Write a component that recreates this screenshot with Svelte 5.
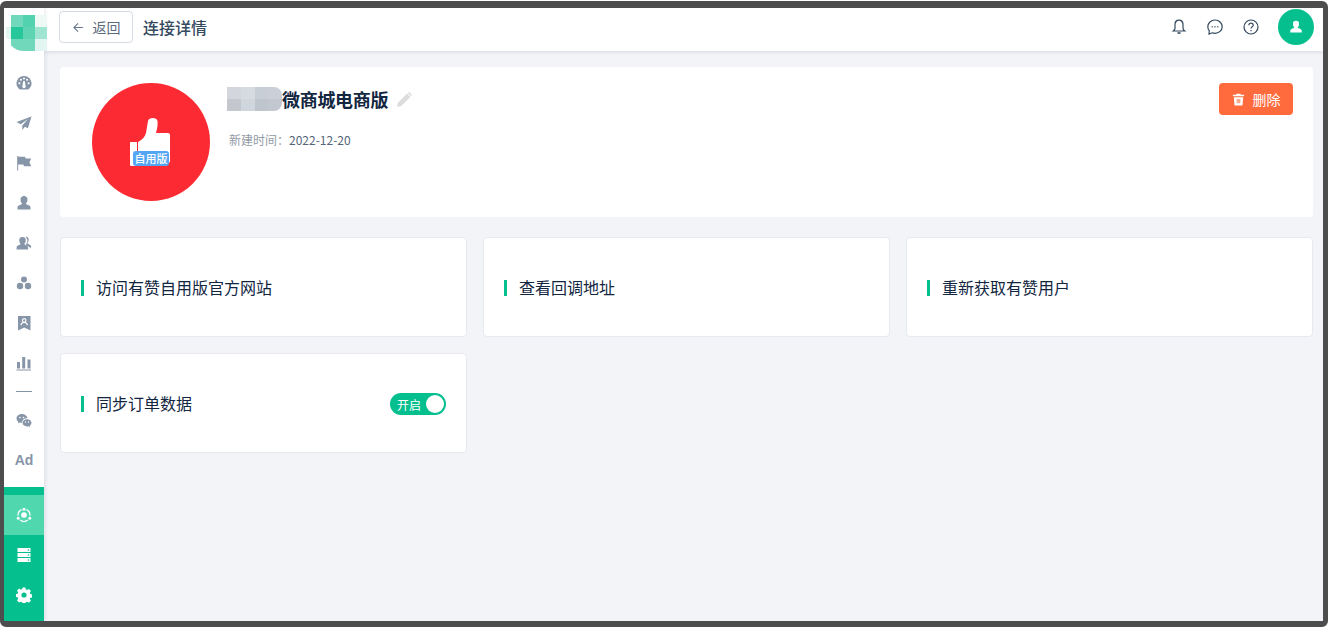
<script>
  const cards = ["访问有赞自用版官方网站", "查看回调地址", "重新获取有赞用户"];
  const logoCells = ["#fff", "#72d8bb", "#52d2ae", "#eef9f6", "#e3f5f0", "#25c79b", "#5ed4b3", "#a0e5d2", "#fff", "#72d8bb", "#72d8bb", "#e3f5f0"];
  const blurCells = ["#d3d6dc", "#d6dbe2", "#c8ced6", "#cbd0d8", "#c4c8ce", "#d0d6de", "#bfc5cd", "#c3c8d0"];
</script>

<div class="frame">
  <aside class="sidebar">
    <div class="logo">
      {#each logoCells as c}
        <span style="background:{c}"></span>
      {/each}
    </div>
    <nav class="nav">
      <a href="#a"><svg viewBox="0 0 16 16"><path fill-rule="evenodd" d="M8 1a7.500 7.500 0 0 0-5.300 12.800c.4.400 1 .7 1.600.7h7.400c.6 0 1.200-.3 1.600-.7A7.500 7.500 0 0 0 8 1zM7.300 6h1.400l.9 5a1.700 1.700 0 1 1-3.200 0z"/><circle cx="3.400" cy="8.300" r="1" fill="#fff"/><circle cx="12.600" cy="8.300" r="1" fill="#fff"/><circle cx="5" cy="4.800" r="1" fill="#fff"/><circle cx="11" cy="4.800" r="1" fill="#fff"/><circle cx="8" cy="3.400" r="1" fill="#fff"/></svg></a>
      <a href="#a"><svg viewBox="0 0 16 16"><path d="M15.500 1.500L.5 7l4.200 2.300L12 4 6.300 10.500V15l2.600-3.300 3 1.600z"/></svg></a>
      <a href="#a"><svg viewBox="0 0 16 16"><path d="M1.200 1h1v14.500h-1zM2.200 1.800H9l.6 1.800h5.600l-1.800 3.600 1.800 4H8l-.6-1.800H2.200z"/></svg></a>
      <a href="#a"><svg viewBox="0 0 16 16"><path d="M8 1a3.500 3.500 0 0 1 3.500 3.700c0 2-1 3.300-1.700 4 .1.900 4.200 1.300 4.700 3.300v2.400H1.500V12c.5-2 4.600-2.400 4.700-3.300-.7-.7-1.700-2-1.700-4A3.500 3.500 0 0 1 8 1z"/></svg></a>
      <a href="#a"><svg viewBox="0 0 16 16"><path d="M6.500 2a3.200 3.200 0 0 1 3.200 3.400c0 1.700-.9 3-1.500 3.600.1.900 3 1.200 3.800 2.700l.2 2.800H.5L.7 12c.5-1.900 3.900-2.100 4.100-3-.7-.7-1.500-1.900-1.500-3.600A3.200 3.200 0 0 1 6.500 2z"/><path d="M10 1.500c2.300.2 3.100 2.600 2.500 4.500-.3.900-.9 1.700-1.200 2.300.8 1 3.200 1.300 4 3l-1 2.200c-.2-2-3.800-2.500-4.400-4 .8-1.300 1.700-2.600 1.400-4.300-.1-1-.6-2.500-1.800-3.100z" /></svg></a>
      <a href="#a"><svg viewBox="0 0 16 16"><circle cx="8" cy="4.500" r="3"/><circle cx="4" cy="11" r="3.200"/><circle cx="12" cy="11" r="3.200"/></svg></a>
      <a href="#a"><svg viewBox="0 0 16 16"><path d="M2 1h12.500v14.500l-6.200-3-6.300 3zM8.200 3a2.400 2.400 0 0 0-1.500 4.200c-1 .4-2.200 1.100-2.400 2.800l1.300.3c.1-1.400 1.300-2.200 2.600-2.200s2.500.8 2.600 2.200l1.300-.3c-.2-1.700-1.400-2.400-2.400-2.800A2.400 2.400 0 0 0 8.200 3zm0 1.200a1.200 1.200 0 1 1 0 2.400 1.200 1.200 0 0 1 0-2.400z" fill-rule="evenodd"/></svg></a>
      <a href="#a"><svg viewBox="0 0 16 16"><path d="M1 7h3v6.500H1zM6.200 2h3v11.500h-3zM11.500 4.500h3v9h-3zM.5 14.500h14.500v1H.5z"/></svg></a>
      <div class="rule"></div>
      <a href="#a"><svg viewBox="0 0 16 16"><path d="M6 2C3 2 .5 4 .5 6.500c0 1.400.8 2.600 2 3.500l-.5 1.600L4 10.500c.6.200 1.200.3 2 .3-.2-2.600 2.500-4.800 5.600-4.500C11 3.900 8.700 2 6 2z"/><path d="M11 7.200c-2.500 0-4.500 1.600-4.500 3.600s2 3.600 4.500 3.600c.5 0 1-.1 1.500-.2l1.600 1-.4-1.500c1-.7 1.800-1.700 1.800-2.900 0-2-2-3.600-4.500-3.600z"/><g fill="#fff"><circle cx="4" cy="5.500" r=".8"/><circle cx="7.500" cy="5.500" r=".8"/><circle cx="9.500" cy="10" r=".7"/><circle cx="12.500" cy="10" r=".7"/></g></svg></a>
      <a href="#a" class="ad">Ad</a>
    </nav>
    <div class="tools">
      <a href="#a" class="active"><svg viewBox="0 0 16 16" fill="none" stroke="#fff" stroke-width="1.200"><circle cx="8" cy="8" r="2.800" fill="#fff" stroke="none"/><path d="M5.600 2.600a6 6 0 0 0-3.500 6.200M10.400 2.600a6 6 0 0 1 3.500 6.200M4.200 13a6 6 0 0 0 7.600 0"/><circle cx="8" cy="2.200" r="1.500" fill="#fff" stroke="none"/><circle cx="2.200" cy="11.300" r="1.500" fill="#fff" stroke="none"/><circle cx="13.800" cy="11.300" r="1.500" fill="#fff" stroke="none"/></svg></a>
      <a href="#a"><svg viewBox="0 0 16 16" fill="#fff"><path d="M1.500 1h13v4h-13zM1.500 6h13v4h-13zM1.500 11h13v4h-13z"/><circle cx="12.500" cy="3" r=".8" fill="#05bf8f"/><circle cx="12.500" cy="8" r=".8" fill="#05bf8f"/><circle cx="12.500" cy="13" r=".8" fill="#05bf8f"/></svg></a>
      <a href="#a"><svg viewBox="0 0 16 16" fill="#fff"><path fill-rule="evenodd" d="M6.600.5h2.800l.4 2 1.300.6 1.800-1.100 2 2-1.100 1.800.6 1.300 2 .4v2.800l-2 .4-.6 1.300 1.100 1.800-2 2-1.800-1.100-1.300.6-.4 2H6.600l-.4-2-1.300-.6L3.100 15.400l-2-2 1.100-1.800-.6-1.300-2-.4V7.100l2-.4.6-1.300L1.100 3.600l2-2 1.800 1.100 1.300-.6zM8 5.400a2.600 2.600 0 1 0 0 5.200 2.600 2.600 0 0 0 0-5.200z"/></svg></a>
    </div>
  </aside>

  <div class="content">
    <header class="topbar">
      <button class="back">
        <svg viewBox="0 0 14 14" fill="none" stroke="#6b7a8c" stroke-width="1.200"><path d="M12 7H2M6.500 2.500L2 7l4.500 4.500"/></svg>
        <span>返回</span>
      </button>
      <h1>连接详情</h1>
      <div class="actions">
        <svg viewBox="0 0 16 16" fill="none" stroke="#34495e" stroke-width="1.200"><path d="M8 1.200c-2.500 0-4 2-4 4.300v3.800c0 1-.8 2-1.700 2.700h11.400c-.9-.7-1.700-1.700-1.700-2.700V5.500c0-2.300-1.500-4.300-4-4.300z"/><path d="M6.500 14h3" stroke-width="1.600"/></svg>
        <svg viewBox="0 0 16 16" fill="none" stroke="#34495e" stroke-width="1.200"><path d="M8 1C4 1 .8 4 .8 7.700c0 1.600.6 3 1.500 4.100L2 15l3.300-1.200c.8.300 1.800.5 2.700.5 4 0 7.200-3 7.200-6.600S12 1 8 1z"/><path d="M4.700 7.800h1M7.500 7.800h1M10.300 7.800h1" stroke-width="1.400"/></svg>
        <svg viewBox="0 0 16 16" fill="none" stroke="#34495e" stroke-width="1.200"><circle cx="8" cy="8" r="7"/><path d="M5.800 6.200C5.800 5 6.800 4.200 8 4.200s2.200.8 2.200 2c0 1.700-2.200 1.700-2.200 3.400"/><path d="M8 11v1.200"/></svg>
        <div class="avatar">
          <svg viewBox="0 0 16 16" fill="#fff"><path d="M8 1a3.500 3.500 0 0 1 3.500 3.700c0 2-1 3.300-1.700 4 .1.900 4.200 1.300 4.700 3.300v2.400H1.500V12c.5-2 4.600-2.400 4.700-3.300-.7-.7-1.700-2-1.700-4A3.500 3.500 0 0 1 8 1z"/></svg>
        </div>
      </div>
    </header>

    <main class="main">
      <section class="detail">
        <div class="badge">
          <svg viewBox="0 0 40 48" class="thumb"><path fill="#fff" d="M0 24.500c0-.5.500-.5 1-.5h6v24H1c-.5 0-1-.5-1-1zM8 24c4-2 7-5 8-9l2-12c.5-4 9-4 9.500 0 .5 4-.5 8-1.500 12h12c1.500 0 2 1 2 2v26c0 1-1 2-2 2H8z"/></svg>
          <span class="tag">自用版</span>
        </div>
        <div class="info">
          <div class="name">
            <div class="blur">
              {#each blurCells as c}
                <span style="background:{c}"></span>
              {/each}
            </div>
            <h2>微商城电商版</h2>
            <svg class="pen" viewBox="0 0 16 16" fill="#dcdcdc"><path d="M0 16l1-4.500L10.800 1.700l3.500 3.500L4.500 15zM11.800.7c.6-.6 1.500-.6 2.100 0l1.400 1.400c.6.600.6 1.500 0 2.100l-.3.300-3.500-3.500z"/></svg>
          </div>
          <p class="time"><span>新建时间：</span>2022-12-20</p>
        </div>
        <button class="del">
          <svg viewBox="0 0 14 14" fill="#fff"><path d="M5 .8h4l.5 1.200H13v1.500H1V2h3.500zM2 4.500h10l-.6 8.200c0 .4-.5.800-1 .800H3.600c-.5 0-1-.4-1-.8z"/><path fill="#f9a88c" d="M5 6.500h4v4.500H5z"/></svg>
          <span>删除</span>
        </button>
      </section>

      <section class="grid">
        {#each cards as c}
          <div class="card"><span class="title">{c}</span></div>
        {/each}
        <div class="card">
          <span class="title">同步订单数据</span>
          <div class="switch"><span>开启</span><i></i></div>
        </div>
      </section>
    </main>
  </div>
</div>

<style>
  :global(body) {
    margin: 0;
    background: #fff;
    font-family: "Noto Sans CJK SC", "Noto Sans", sans-serif;
  }
  .frame {
    box-sizing: border-box;
    width: 1328px;
    height: 626px;
    margin-top: 1px;
    border: solid #4d4d4d;
    border-width: 7px 5px 6px 4px;
    border-radius: 6px;
    display: flex;
    overflow: hidden;
    background: #f2f4f8;
  }
  .sidebar {
    width: 40px;
    flex: none;
    background: #fff;
    display: flex;
    flex-direction: column;
    box-shadow: 1px 0 4px rgba(40, 60, 90, 0.12);
    z-index: 2;
  }
  .logo {
    display: grid;
    grid-template-columns: 5px repeat(3, 12px);
    grid-auto-rows: 12px;
    width: 41px;
    height: 36px;
    margin: 7px 0 0 2px;
    border-radius: 0 0 0 18px;
    overflow: hidden;
  }
  .nav {
    display: flex;
    flex-direction: column;
    align-items: center;
    margin-top: 12px;
  }
  .nav a {
    display: flex;
    align-items: center;
    justify-content: center;
    height: 40px;
    width: 100%;
    text-decoration: none;
  }
  .nav svg {
    width: 16px;
    height: 16px;
    fill: #8795a8;
  }
  .rule {
    width: 16px;
    height: 1px;
    background: #8795a8;
    margin: 8px 0;
  }
  .nav .ad {
    color: #8795a8;
    font: bold 14px "Liberation Sans", sans-serif;
  }
  .tools {
    margin-top: auto;
    height: 134px;
    box-sizing: border-box;
    padding-top: 8px;
    background: #05bf8f;
  }
  .tools a {
    display: flex;
    align-items: center;
    justify-content: center;
    height: 40px;
  }
  .tools svg {
    width: 16px;
    height: 16px;
  }
  .tools .active {
    background: #50d7ae;
  }
  .content {
    flex: 1;
    min-width: 0;
    display: flex;
    flex-direction: column;
  }
  .topbar {
    height: 43px;
    flex: none;
    box-sizing: border-box;
    background: #fff;
    display: flex;
    align-items: center;
    padding: 0 9px 5px 15px;
    box-shadow: 0 1px 4px rgba(40, 60, 90, 0.14);
    z-index: 1;
  }
  .back {
    width: 74px;
    height: 32px;
    box-sizing: border-box;
    border: 1px solid #d5dbe3;
    border-radius: 4px;
    background: #fff;
    color: #5a6a7c;
    font: 14px "Noto Sans CJK SC", sans-serif;
    display: flex;
    align-items: center;
    justify-content: center;
    gap: 8px;
    padding: 0;
  }
  .back svg {
    width: 13px;
    height: 13px;
  }
  .topbar h1 {
    margin: 0 0 0 10px;
    font-size: 16px;
    font-weight: 500;
    color: #34495e;
  }
  .actions {
    margin-left: auto;
    display: flex;
    align-items: center;
    gap: 20px;
  }
  .actions > svg {
    width: 16px;
    height: 16px;
  }
  .avatar {
    width: 36px;
    height: 36px;
    margin-left: -1px;
    border-radius: 50%;
    background: #05bf8f;
    display: flex;
    align-items: center;
    justify-content: center;
  }
  .avatar svg {
    width: 14px;
    height: 14px;
  }
  .main {
    flex: 1;
    padding: 16px 10px 0 16px;
    display: flex;
    flex-direction: column;
    gap: 20px;
  }
  .detail {
    height: 150px;
    flex: none;
    background: #fff;
    border-radius: 4px;
    display: flex;
    padding: 16px 20px 0 32px;
    box-sizing: border-box;
  }
  .badge {
    position: relative;
    width: 118px;
    height: 118px;
    flex: none;
    border-radius: 50%;
    background: #fc2b33;
  }
  .thumb {
    position: absolute;
    left: 38px;
    top: 35px;
    width: 40px;
    height: 48px;
  }
  .tag {
    position: absolute;
    left: 41px;
    top: 68px;
    width: 36px;
    height: 15px;
    border-radius: 3px;
    background: #54a6f5;
    color: #fff;
    font-size: 11px;
    line-height: 15px;
    text-align: center;
    font-weight: 500;
  }
  .info {
    margin-left: 17px;
    flex: 1;
  }
  .name {
    display: flex;
    align-items: center;
    height: 30px;
    margin-top: 1px;
  }
  .blur {
    width: 55px;
    height: 24px;
    flex: none;
    display: grid;
    grid-template-columns: repeat(4, 1fr);
    border-radius: 0 8px 8px 0;
    overflow: hidden;
  }
  .name h2 {
    margin: 0;
    font-size: 18px;
    font-weight: 700;
    letter-spacing: -0.3px;
    color: #12263f;
  }
  .pen {
    width: 15px;
    height: 15px;
    margin-left: 9px;
  }
  .time {
    margin: 17px 0 0 2px;
    font-size: 12px;
    line-height: 18px;
    color: #56657a;
  }
  .time span {
    color: #929ba6;
  }
  .del {
    width: 74px;
    height: 32px;
    border: 0;
    border-radius: 4px;
    background: #ff6b3d;
    color: #fff;
    font: 14px "Noto Sans CJK SC", sans-serif;
    display: flex;
    align-items: center;
    justify-content: center;
    gap: 8px;
    padding: 0;
  }
  .del svg {
    width: 13px;
    height: 13px;
  }
  .grid {
    display: grid;
    grid-template-columns: repeat(3, 407px);
    grid-auto-rows: 100px;
    gap: 16px;
  }
  .card {
    box-sizing: border-box;
    background: #fff;
    border: 1px solid #e6e9ef;
    border-radius: 4px;
    display: flex;
    align-items: center;
    justify-content: space-between;
    padding: 2px 20px 0;
  }
  .title {
    border-left: 3px solid #05bf8f;
    padding-left: 12px;
    height: 16px;
    line-height: 14px;
    font-size: 16px;
    color: #12263f;
  }
  .switch {
    width: 56px;
    height: 22px;
    box-sizing: border-box;
    border-radius: 11px;
    background: #05bf8f;
    color: #fff;
    font-size: 12px;
    display: flex;
    align-items: center;
    justify-content: space-between;
    padding: 0 2px 0 7px;
  }
  .switch i {
    width: 18px;
    height: 18px;
    border-radius: 50%;
    background: #fff;
  }
</style>
